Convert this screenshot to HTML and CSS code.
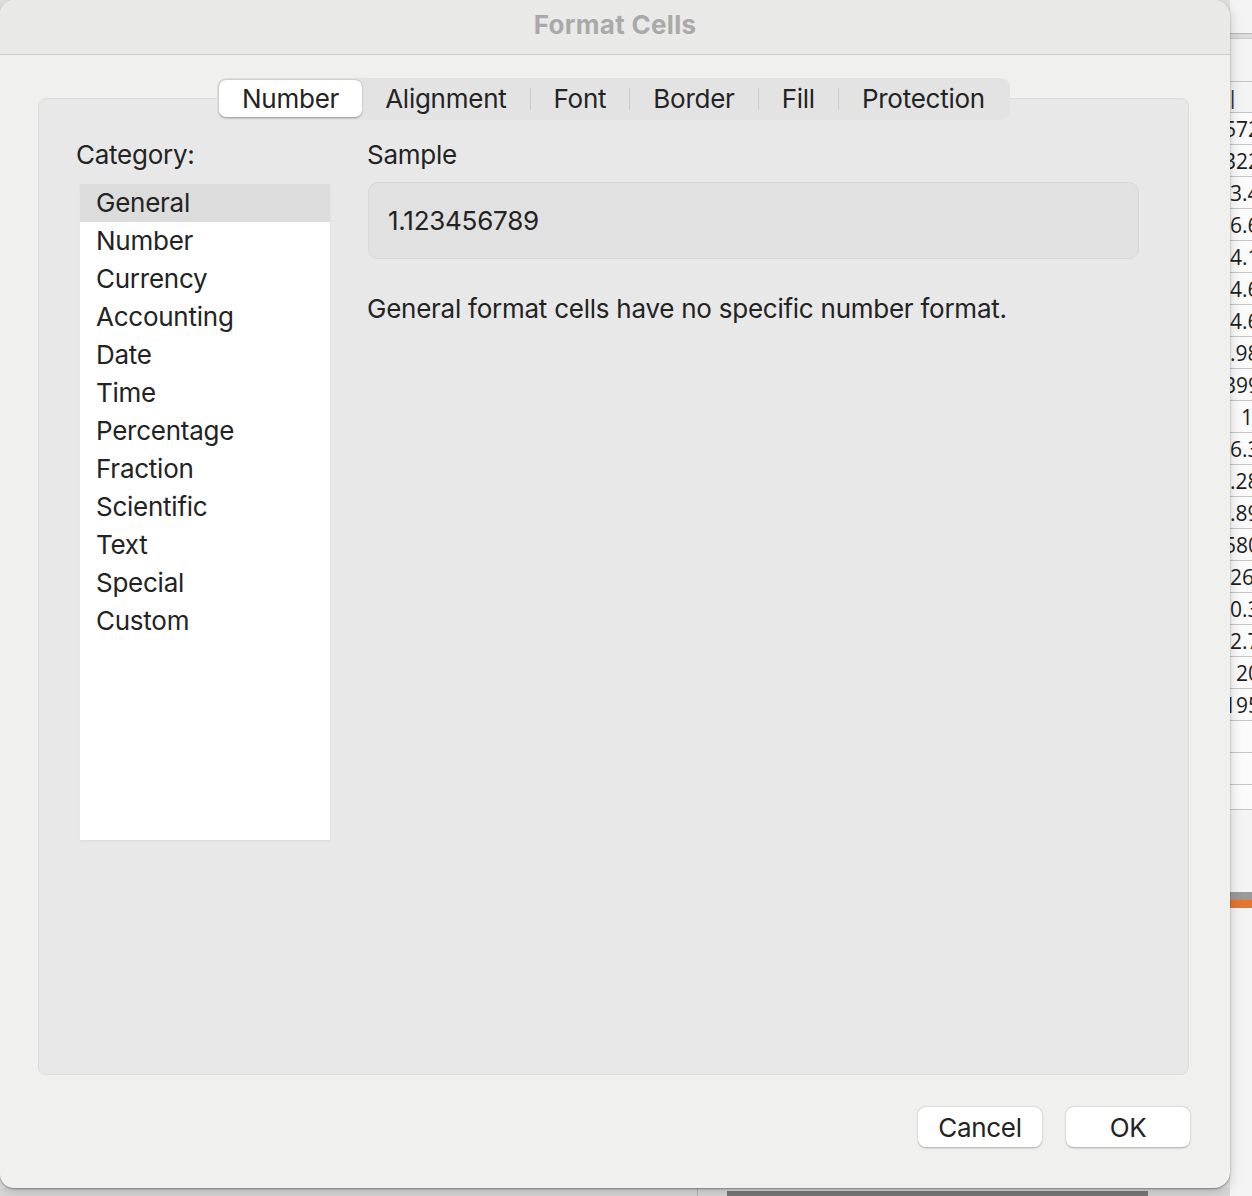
FILE: index.html
```html
<!DOCTYPE html>
<html lang="en">
<head>
    <meta charset="UTF-8">
    <title>Format Cells</title>
    <link rel="stylesheet" href="styles.css">
</head>
<body>
    <div class="desk">
        <div class="dialog">
            <div class="titlebar">Format Cells</div>

            <div class="content">
                <div class="tabs">
                    <div class="tab active">Number</div>
                    <div class="tab">Alignment</div>
                    <span class="sep"></span>
                    <div class="tab">Font</div>
                    <span class="sep"></span>
                    <div class="tab">Border</div>
                    <span class="sep"></span>
                    <div class="tab">Fill</div>
                    <span class="sep"></span>
                    <div class="tab">Protection</div>
                </div>

                <div class="panel">
                    <div class="col-left">
                        <div class="label">Category:</div>
                        <ul class="category-list">
                            <li class="selected">General</li>
                            <li>Number</li>
                            <li>Currency</li>
                            <li>Accounting</li>
                            <li>Date</li>
                            <li>Time</li>
                            <li>Percentage</li>
                            <li>Fraction</li>
                            <li>Scientific</li>
                            <li>Text</li>
                            <li>Special</li>
                            <li>Custom</li>
                        </ul>
                    </div>
                    <div class="col-right">
                        <div class="label">Sample</div>
                        <div class="sample">1.123456789</div>
                        <p class="desc">General format cells have no specific number format.</p>
                    </div>
                </div>
            </div>

            <div class="buttons">
                <button class="btn">Cancel</button>
                <button class="btn">OK</button>
            </div>
        </div>

        <!-- sheet underneath, bottom edge -->
        <div class="under">
            <span class="under-line"></span>
            <span class="under-bar"></span>
        </div>
    </div>

    <!-- sheet underneath, right edge -->
    <div class="sheet">
        <div class="sheet-top">
            <div class="formula-line"></div>
            <div class="header-row">|</div>
        </div>
        <div class="cells">
            <div class="cell">5721</div>
            <div class="cell">3224</div>
            <div class="cell pad-sm">3.45</div>
            <div class="cell pad-sm">6.61</div>
            <div class="cell pad-sm">4.12</div>
            <div class="cell pad-sm">4.63</div>
            <div class="cell pad-sm">4.67</div>
            <div class="cell cut">0.981</div>
            <div class="cell">3990</div>
            <div class="cell pad-lg">1</div>
            <div class="cell pad-sm">6.35</div>
            <div class="cell cut">0.281</div>
            <div class="cell cut">0.893</div>
            <div class="cell">5803</div>
            <div class="cell pad-sm">26</div>
            <div class="cell pad-sm">0.35</div>
            <div class="cell pad-sm">2.71</div>
            <div class="cell pad-md">20</div>
            <div class="cell">1950</div>
            <div class="cell"></div>
            <div class="cell"></div>
            <div class="cell short"></div>
        </div>
        <div class="sheet-tabs"></div>
    </div>
</body>
</html>
```

FILE: styles.css
```css
html, body {
    margin: 0;
    padding: 0;
}
body {
    width: 1252px;
    height: 1196px;
    overflow: hidden;
    display: flex;
    background: #e2e2e2;
    font-family: Inter, "Liberation Sans", sans-serif;
    font-size: 26px;
    letter-spacing: -0.25px;
    color: #232323;
}

.desk {
    width: 1230px;
    flex-shrink: 0;
    display: flex;
    flex-direction: column;
    position: relative;
    z-index: 2;
}

.dialog {
    height: 1188px;
    background: #f0f0ef;
    border-radius: 14px 16px 16px 14px;
    box-shadow: 0 1px 2px rgba(0, 0, 0, 0.35), 0 4px 14px rgba(0, 0, 0, 0.18);
    display: flex;
    flex-direction: column;
    overflow: hidden;
    position: relative;
    z-index: 2;
}

.titlebar {
    height: 54px;
    line-height: 50px;
    text-align: center;
    background: #e9e9e8;
    border-bottom: 1px solid #cdcdcd;
    color: #a9a9a9;
    font-weight: 700;
    font-size: 26px;
    letter-spacing: 0.3px;
    flex-shrink: 0;
}

.content {
    padding: 23px 41px 0 38px;
    display: flex;
    flex-direction: column;
}

/* segmented tab control */
.tabs {
    align-self: center;
    display: flex;
    align-items: center;
    height: 42px;
    box-sizing: border-box;
    padding: 2px 2px 3px 2px;
    background: #e3e3e3;
    border-radius: 9px;
    margin-bottom: -22px;
    position: relative;
    z-index: 1;
}
.tab {
    height: 37px;
    line-height: 37px;
    padding: 0 23px;
    border-radius: 7px;
}
.tab.active {
    background: #fff;
    box-shadow: 0 0.5px 2px rgba(0, 0, 0, 0.35);
}
.sep {
    width: 1px;
    height: 22px;
    background: #cbcbcb;
}

.panel {
    height: 977px;
    box-sizing: border-box;
    background: #e8e8e8;
    border: 1px solid #dcdcdc;
    border-radius: 8px;
    padding: 40px 49px 0 37px;
    display: flex;
    gap: 37px;
}

.label {
    height: 32px;
    line-height: 32px;
}

.col-left {
    width: 254px;
    flex-shrink: 0;
}
.category-list {
    list-style: none;
    margin: 13px 0 0 4px;
    padding: 0;
    width: 250px;
    height: 656px;
    background: #fff;
    box-shadow: 0 1px 2px rgba(0, 0, 0, 0.06);
}
.category-list li {
    height: 38px;
    line-height: 38px;
    padding-left: 16px;
}
.category-list li.selected {
    background: #dcdcdc;
}

.col-right {
    flex: 1;
}
.sample {
    margin: 11px 0 0 1px;
    height: 77px;
    box-sizing: border-box;
    line-height: 75px;
    padding-left: 19px;
    background: #e1e1e1;
    border: 1px solid #d7d7d7;
    border-radius: 10px;
}
.desc {
    margin: 34px 0 0 0;
    line-height: 32px;
}

.buttons {
    display: flex;
    justify-content: flex-end;
    gap: 24px;
    padding: 32px 40px 0 0;
}
.btn {
    width: 124px;
    height: 40px;
    border: none;
    border-radius: 8px;
    background: #fff;
    box-shadow: 0 0.5px 2px rgba(0, 0, 0, 0.3);
    font-family: inherit;
    font-size: 26px;
    letter-spacing: -0.3px;
    color: #232323;
    padding: 0;
}

/* strip of sheet visible below the dialog */
.under {
    flex: 1;
    display: flex;
    align-items: flex-end;
    background: #dadada;
}
.under-line {
    width: 1px;
    height: 8px;
    background: #b8b8b8;
    margin-left: 697px;
}
.under-bar {
    width: 421px;
    height: 5px;
    background: #7a7a7a;
    margin-left: 29px;
}

/* sheet column to the right of the dialog */
.sheet {
    width: 22px;
    flex-shrink: 0;
    overflow: hidden;
    background: #f4f4f4;
    display: flex;
    flex-direction: column;
}
.sheet-top {
    height: 113px;
    box-sizing: border-box;
    border-bottom: 1px solid #c4c4c4;
}
.formula-line {
    height: 4px;
    margin-top: 33px;
    border-top: 1px solid #b9b9b9;
    border-bottom: 1px solid #c9c9c9;
    background: #dcdcdc;
}
.header-row {
    margin-top: 42px;
    border-top: 1px solid #c4c4c4;
    height: 32px;
    line-height: 32px;
    font-family: "Liberation Sans", sans-serif;
    font-size: 20px;
    color: #333;
}
.cells {
    background: #fbfbfb;
}
.cell {
    height: 32px;
    box-sizing: border-box;
    border-bottom: 1px solid #c6c6c6;
    line-height: 32px;
    font-family: "Open Sans", sans-serif;
    font-size: 21px;
    letter-spacing: 0;
    color: #1e1e1e;
    white-space: nowrap;
    margin-left: -6px;
}
.cell.cut { margin-left: -12px; }
.cell.pad-sm { padding-left: 6px; }
.cell.pad-md { padding-left: 12px; }
.cell.pad-lg { padding-left: 17px; }
.cell.short { height: 25px; }
.sheet-tabs {
    margin-top: 82px;
    height: 8px;
    background: #9a9a9a;
    border-bottom: 8px solid #e57530;
}
```
